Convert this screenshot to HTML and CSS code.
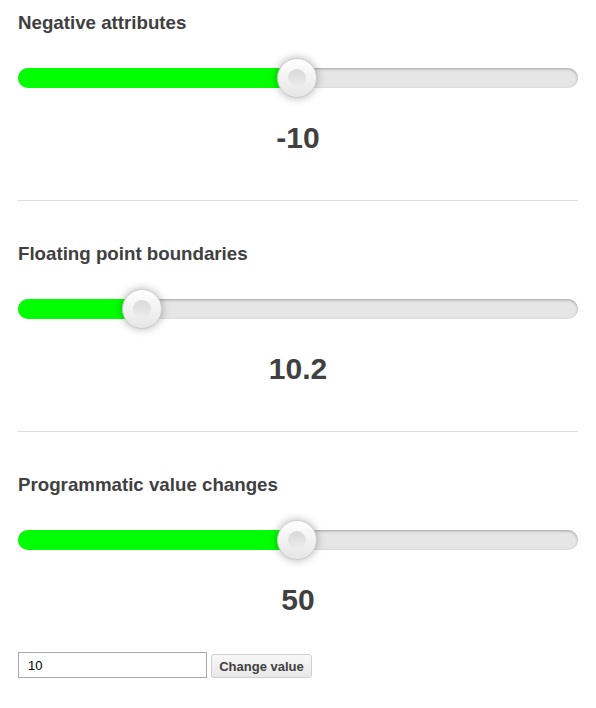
FILE: index.html
```html
<!DOCTYPE html>
<html>
<head>
<meta charset="utf-8">
<link rel="stylesheet" href="styles.css">
</head>
<body>
<div class="page">
  <section class="demo first">
    <h3 class="title">Negative attributes</h3>
    <div class="slider">
      <div class="fill" style="width: 279px"></div>
      <div class="handle" style="left: 259px"></div>
    </div>
    <output class="value">-10</output>
  </section>
  <section class="demo">
    <h3 class="title">Floating point boundaries</h3>
    <div class="slider">
      <div class="fill" style="width: 124px"></div>
      <div class="handle" style="left: 104px"></div>
    </div>
    <output class="value">10.2</output>
  </section>
  <section class="demo last">
    <h3 class="title">Programmatic value changes</h3>
    <div class="slider">
      <div class="fill" style="width: 279px"></div>
      <div class="handle" style="left: 259px"></div>
    </div>
    <output class="value">50</output>
    <div class="controls">
      <input class="num" type="text" value="10">
      <button class="btn" type="button">Change value</button>
    </div>
  </section>
</div>
</body>
</html>
```
FILE: styles.css
```css
html, body {
  margin: 0;
  padding: 0;
  background: #ffffff;
}
body {
  font-family: "Liberation Sans", Arial, Helvetica, sans-serif;
  color: #404040;
}
.page {
  padding: 0 18px;
}
.demo {
  padding: 42px 0 45px;
  border-bottom: 1px solid #dddddd;
}
.demo.first {
  padding-top: 12px;
}
.demo.last {
  border-bottom: none;
  padding-bottom: 30px;
}
.title {
  margin: 0;
  font-size: 18.72px;
  line-height: 22px;
  font-weight: bold;
}
.slider {
  position: relative;
  margin-top: 34px;
  height: 20px;
  border-radius: 10px;
  background: #e6e6e6;
  box-shadow: inset 0 1px 3px rgba(0, 0, 0, 0.3);
}
.fill {
  height: 20px;
  border-radius: 10px;
  background: #00ff00;
}
.handle {
  position: absolute;
  top: -10px;
  width: 40px;
  height: 40px;
  box-sizing: border-box;
  border: 1px solid #cccccc;
  border-radius: 50%;
  background-color: #ffffff;
  background-image: linear-gradient(rgba(255, 255, 255, 0), rgba(0, 0, 0, 0.1));
  box-shadow: 0 0 8px rgba(0, 0, 0, 0.3);
}
.handle::after {
  content: "";
  position: absolute;
  top: 0;
  left: 0;
  right: 0;
  bottom: 0;
  margin: auto;
  width: 18px;
  height: 18px;
  border-radius: 50%;
  background-image: linear-gradient(rgba(0, 0, 0, 0.13), rgba(255, 255, 255, 0));
}
.value {
  display: block;
  margin-top: 33px;
  text-align: center;
  font-size: 30px;
  line-height: 34px;
  font-weight: bold;
}
.controls {
  display: flex;
  align-items: flex-end;
  gap: 4px;
  margin-top: 35px;
}
.num {
  width: 189px;
  height: 26px;
  box-sizing: border-box;
  margin: 0;
  padding: 0 9px;
  border: 1px solid #a9a9a9;
  border-radius: 0;
  font-family: "Liberation Sans", Arial, sans-serif;
  font-size: 13px;
  color: #000000;
  background: #ffffff;
}
.btn {
  width: 101px;
  height: 24px;
  box-sizing: border-box;
  margin: 0;
  padding: 0;
  border: 1px solid #cfcfcf;
  border-radius: 3px;
  background: linear-gradient(#f8f8f8, #e8e8e8);
  font-family: "Liberation Sans", Arial, sans-serif;
  font-size: 13px;
  font-weight: bold;
  color: #404040;
}
```
